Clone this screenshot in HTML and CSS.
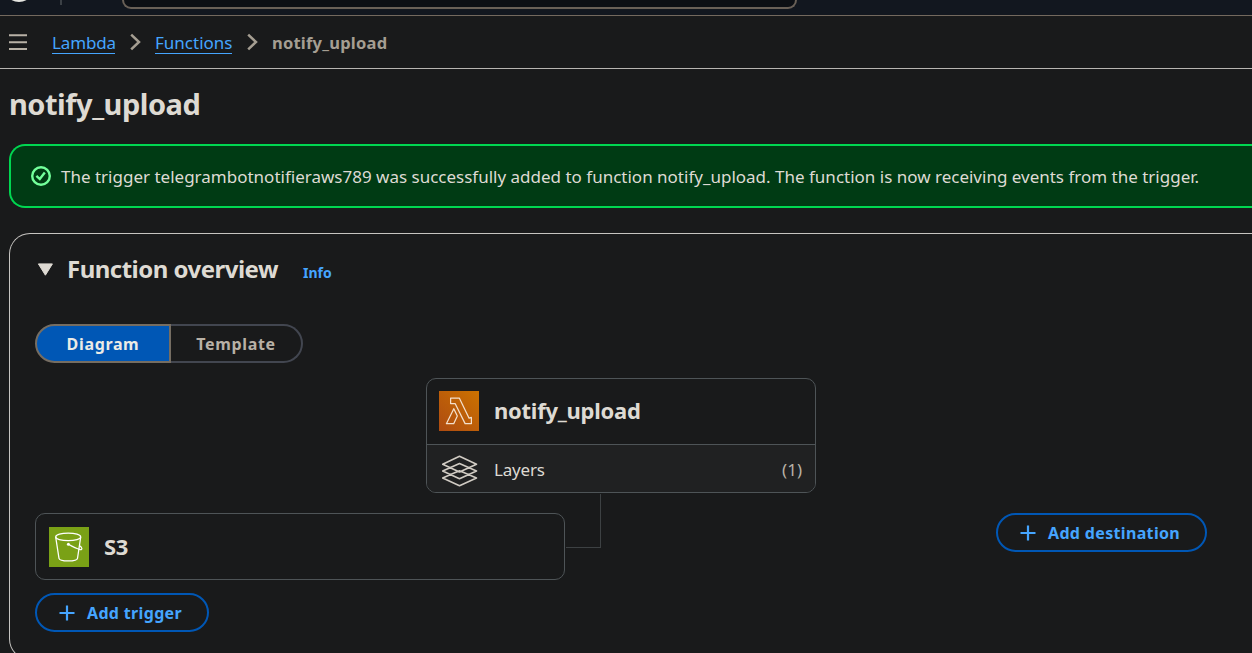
FILE: index.html
```html
<!DOCTYPE html>
<html lang="en">
<head>
<meta charset="utf-8">
<title>notify_upload - Lambda</title>
<link rel="stylesheet" href="styles.css">
</head>
<body>
<div class="page">
  <header class="topnav">
    <span class="logo"></span>
    <span class="divider"></span>
    <span class="search"></span>
  </header>
  <nav class="crumbs">
    <svg class="menu" width="18" height="16" viewBox="0 0 18 16"><path d="M0 1.2H18M0 8.2H18M0 15H18" stroke="#b8b1a6" stroke-width="2.1" fill="none"/></svg>
    <a class="link lambda">Lambda</a>
    <svg class="chev" width="11" height="18" viewBox="0 0 11 18"><path d="M1.2 1.6L9 9L1.2 16.4" stroke="#a59e92" stroke-width="2.5" fill="none"/></svg>
    <a class="link functions">Functions</a>
    <svg class="chev" width="11" height="18" viewBox="0 0 11 18"><path d="M1.2 1.6L9 9L1.2 16.4" stroke="#a59e92" stroke-width="2.5" fill="none"/></svg>
    <span class="current">notify_upload</span>
  </nav>
  <h1 class="title"><span>notify_upload</span></h1>
  <div class="alert">
    <svg width="20" height="20" viewBox="0 0 20 20" fill="none" stroke="#73ff9b" stroke-width="2.4"><circle cx="10" cy="10" r="8.8"/><path d="M5.4 9.8L8.8 13L13.8 6.6"/></svg>
    <span class="message">The trigger telegrambotnotifieraws789 was successfully added to function notify_upload. The function is now receiving events from the trigger.</span>
  </div>
  <section class="panel">
    <div class="panel-head">
      <svg width="16" height="13" viewBox="0 0 16 13"><path d="M1.4 .9H15.4L8.4 12.2Z" fill="#dedad3" stroke="#dedad3" stroke-linejoin="round"/></svg>
      <h2>Function overview</h2>
      <a class="info">Info</a>
    </div>
    <div class="segments">
      <div class="segment active"><span>Diagram</span></div>
      <div class="segment"><span>Template</span></div>
    </div>
    <div class="function-card">
      <div class="function-name">
        <svg width="40" height="40" viewBox="0 0 40 40">
          <defs><linearGradient id="orange" x1="0" y1="1" x2="1" y2="0"><stop stop-color="#ae4b11"/><stop offset="1" stop-color="#cb7200"/></linearGradient></defs>
          <path d="M0 0H40V40H0Z" fill="url(#orange)"/>
          <g fill="none" stroke="#f3dfcb" stroke-width="1.25" stroke-linejoin="round"><path d="M11.6 7.1H20.3L30.1 27.2L32.4 26.4V32.6H26.1L16.1 12.5H11.6Z"/><path d="M14.8 17.7L18.3 25L14.7 32.7H7.4Z"/></g>
        </svg>
        <strong>notify_upload</strong>
      </div>
      <div class="layers">
        <svg width="36" height="32" viewBox="0 0 36 32" fill="none" stroke="#d0cbc3" stroke-width="1.6" stroke-linejoin="round"><path d="M17.5 1.2L34.5 9.2L17.5 17L.7 9.2ZM17.5 8.5L34.5 16L17.5 23.8L.7 16ZM11.5 18.3L.7 23L17.5 30.8L34.5 23L23.5 18.3M11.5 18.3L17.5 15.8L23.5 18.3"/></svg>
        <span class="layers-label">Layers</span>
        <span class="layers-count">(1)</span>
      </div>
    </div>
    <div class="connections">
      <div class="triggers">
        <div class="trigger-card">
          <svg width="40" height="40" viewBox="0 0 40 40"><path d="M0 0H40V40H0Z" fill="#7aa116"/><g fill="none" stroke="#fff" stroke-width="1.25"><ellipse cx="19.2" cy="9.9" rx="12.5" ry="3.8"/><path d="M6.7 10.2L10 31.3C10.5 34.7 28 34.7 28.5 31.3L31.7 10.2"/><path d="M19.5 17.3C23 19.4 27.5 21.7 31.2 22.6C33.6 23.1 33.4 20.6 30.7 18.7"/></g><circle cx="19.4" cy="17.2" r="1.5" fill="#fff"/></svg>
          <strong class="service">S3</strong>
        </div>
        <div class="button add-trigger"><svg width="16" height="16" viewBox="0 0 16 16"><path d="M8 .5V15.5M.5 8H15.5" stroke="#45a5ff" stroke-width="2.2"/></svg><span>Add trigger</span></div>
      </div>
      <div class="connector"></div>
      <div class="button add-destination"><svg width="16" height="16" viewBox="0 0 16 16"><path d="M8 .5V15.5M.5 8H15.5" stroke="#45a5ff" stroke-width="2.2"/></svg><span>Add destination</span></div>
    </div>
  </section>
</div>
</body>
</html>
```
FILE: styles.css
```css
* { box-sizing: border-box; }
body { margin: 0; background: #191a1b; color: #dedad3; font-family: "Noto Sans", sans-serif; font-size: 17px; overflow: hidden; }
svg { display: block; flex: none; }
span, a, strong, h2 { white-space: nowrap; }
.page { width: 1252px; height: 653px; overflow: hidden; }
.topnav { height: 16px; background: #12171f; border-bottom: 1px solid #73695e; display: flex; align-items: flex-start; }
.logo { width: 20px; height: 6px; margin: -4px 0 0 9px; background: #e5e5e0; border-radius: 0 0 10px 10px / 0 0 6px 6px; }
.divider { width: 2px; height: 5px; margin-left: 31px; background: #3b4045; }
.search { width: 675px; height: 9px; margin-left: 60px; background: #0c0f14; border: 2px solid #696057; border-top: 0; border-radius: 0 0 9px 9px; }
.crumbs { height: 53px; border-bottom: 1px solid #b7b5b2; display: flex; align-items: flex-start; padding-left: 9px; line-height: 24px; }
.menu { margin-top: 18px; }
.link { color: #45a5ff; border-bottom: 1px solid #45a5ff; height: 23px; margin-top: 15px; }
.lambda { width: 63px; margin-left: 25px; letter-spacing: -.15px; }
.chev { margin: 17px 14px 0 15px; }
.functions { width: 77px; }
.current { margin: 15px 0 0 0; color: #a59e92; font-size: 16.5px; font-weight: 700; letter-spacing: .22px; }
.title { margin: 0; height: 75px; padding: 14px 0 0 9px; font-size: 29px; line-height: 42px; font-weight: 700; letter-spacing: -.48px; }
.alert { height: 64px; margin-left: 9px; border: 2px solid #00d751; border-right: 0; border-radius: 16px 0 0 16px; background: #003b14; display: flex; align-items: center; padding-left: 20px; gap: 10px; }
.panel { height: 427px; margin: 25px 0 0 9px; border: 1px solid #c6c4c1; border-right: 0; border-radius: 21px 0 0 21px; padding-left: 25px; }
.panel-head { display: flex; height: 90px; align-items: flex-start; }
.panel-head svg { margin: 29px 0 0 2px; }
h2 { margin: 18px 0 0 14px; font-size: 24px; line-height: 34px; font-weight: 700; letter-spacing: -.52px; width: 236px; }
.info { color: #45a5ff; font-size: 14px; font-weight: 700; line-height: 20px; margin-top: 29px; }
.segments { display: flex; width: 268px; height: 39px; }
.segment { flex: none; width: 132px; border: 2px solid #424650; border-left: 0; border-radius: 0 20px 20px 0; display: flex; align-items: center; justify-content: center; font-size: 16px; font-weight: 700; color: #b8b1a6; letter-spacing: .65px; padding-top: 1px; }
.segment.active { width: 136px; border: 2px solid #756d62; border-radius: 20px 0 0 20px; background: #0057b5; color: #ebebe6; }
.function-card { width: 390px; height: 115px; margin: 15px 0 0 391px; border: 1px solid #4e5457; border-radius: 10px; overflow: hidden; }
.function-name { height: 66px; border-bottom: 1px solid #4e5457; display: flex; align-items: center; padding: 0 0 1px 12px; gap: 15px; }
strong { font-size: 22px; font-weight: 700; letter-spacing: -.25px; margin-top: -2px; }
.service { margin-top: -1px; }
.layers { height: 47px; background: #202122; display: flex; align-items: center; padding: 0 13px 0 15px; }
.layers svg { margin-top: 5px; }
.layers-label { margin-left: 16px; margin-top: 2px; letter-spacing: -.2px; }
.layers-count { margin-left: auto; margin-top: 2px; color: #b8b1a6; }
.connections { display: flex; align-items: flex-start; }
.triggers { width: 530px; padding-top: 20px; }
.trigger-card { height: 67px; border: 1px solid #4e5457; border-radius: 10px; display: flex; align-items: center; padding-left: 13px; gap: 15px; }
.connector { width: 35px; height: 54px; margin: 1px 0 0 1px; border: 1px solid #3d4143; border-top: 0; border-left: 0; }
.button { display: flex; height: 39px; border: 2px solid #0057b5; border-radius: 20px; align-items: center; color: #45a5ff; font-size: 16px; font-weight: 700; letter-spacing: .34px; padding-left: 22px; gap: 12px; }
.button span { margin-top: 1px; }
.add-trigger { width: 174px; margin-top: 13px; }
.add-destination { width: 211px; margin: 20px 0 0 395px; }
```
